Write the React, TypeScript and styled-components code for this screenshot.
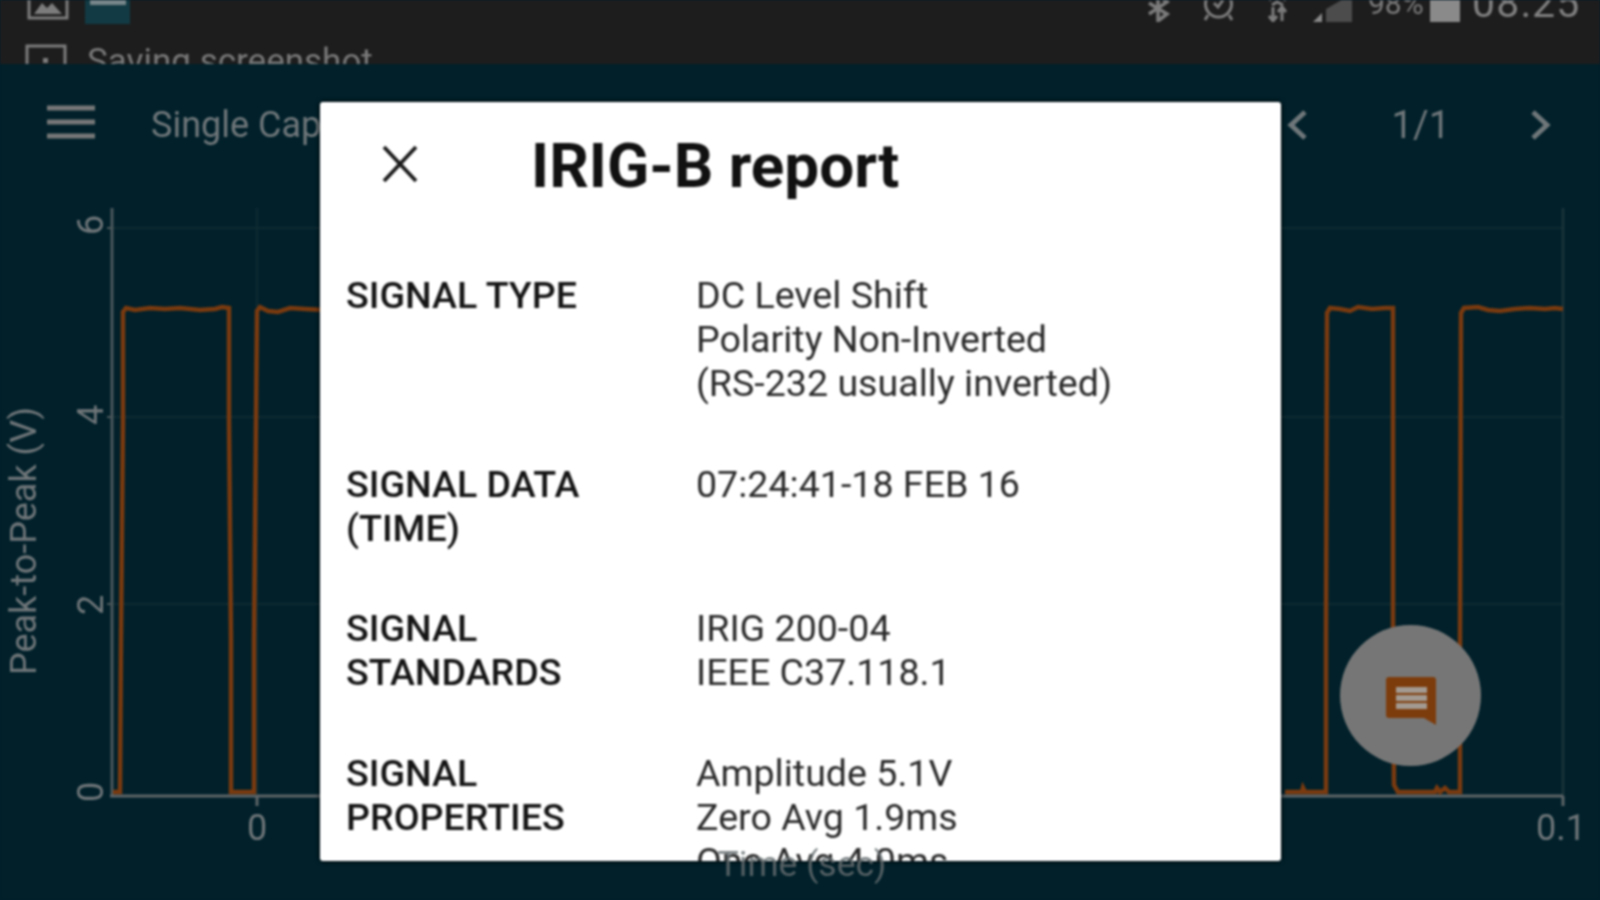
import React from "react";
import styled, { createGlobalStyle } from "styled-components";

const Global = createGlobalStyle`
  html, body { margin: 0; padding: 0; background: #01202a; }
  body { font-family: Roboto, "Liberation Sans", sans-serif; }
`;

const Screen = styled.div`
  position: relative;
  width: 1600px;
  height: 900px;
  overflow: hidden;
  background: #01202a;
  display: flex;
  flex-direction: column;
  filter: blur(0.9px);
`;

const StatusBar = styled.header`
  height: 64px;
  flex: none;
  overflow: hidden;
  background: #1d1d1d;
  color: #7c7c7c;
`;

const StatusRow = styled.div`
  height: 28px;
  margin-top: -6px;
  display: flex;
  align-items: flex-start;
  padding: 0 18px 0 27px;
`;

const Thumb = styled.div`
  width: 45px;
  height: 30px;
  margin-left: 16px;
  background: #123a44;
  display: flex;
  justify-content: center;
  align-items: flex-start;
  padding-top: 6px;
  box-sizing: border-box;
  &::before {
    content: "";
    width: 36px;
    height: 5px;
    background: #77868a;
  }
`;

const Tray = styled.div`
  margin-left: auto;
  display: flex;
  align-items: flex-end;
  height: 28px;
`;

const TrayIcon = styled.svg<{ $gap: number }>`
  display: block;
  flex: none;
  margin-left: ${(p) => p.$gap}px;
`;

const Percent = styled.span`
  font-size: 30px;
  line-height: 30px;
  width: 55px;
  margin-left: 16px;
  margin-bottom: 3px;
  white-space: nowrap;
`;

const Clock = styled.span`
  font-size: 41px;
  line-height: 41px;
  letter-spacing: 1.3px;
  margin-left: 12px;
  margin-bottom: -2px;
  width: 110px;
  white-space: nowrap;
  color: #808080;
`;

const NotifyRow = styled.div`
  display: flex;
  align-items: flex-start;
  gap: 20px;
  padding: 22px 0 0 25px;
  font-size: 35px;
  line-height: 40px;
  color: #787878;
`;

const NotifyText = styled.span`
  margin-top: -2px;
  white-space: nowrap;
`;

const Toolbar = styled.nav`
  height: 122px;
  flex: none;
  display: flex;
  align-items: center;
  padding: 0 48px 0 47px;
  box-sizing: border-box;
  color: #6f777a;
`;

const MenuIcon = styled.svg`
  margin-bottom: 7px;
`;

const ToolbarTitle = styled.span`
  font-size: 36px;
  margin-left: 56px;
  white-space: nowrap;
`;

const Pager = styled.div`
  margin-left: auto;
  display: flex;
  align-items: center;
  gap: 84px;
  font-size: 38px;
`;

const PageCount = styled.span`
  margin-right: -4px;
`;

const Plot = styled.svg`
  display: block;
  flex: 1;
  width: 1600px;
  text {
    font-family: Roboto, "Liberation Sans", sans-serif;
    fill: #6f7679;
  }
`;

const Dialog = styled.section`
  position: absolute;
  left: 320px;
  top: 102px;
  width: 961px;
  height: 759px;
  background: #fff;
  border-radius: 3px;
  overflow: hidden;
  display: flex;
  flex-direction: column;
  box-shadow: 0 0 5px #000;
  color: #222;
`;

const DialogHeader = styled.div`
  display: flex;
  align-items: center;
  height: 123px;
  flex: none;
  padding-left: 62px;
`;

const DialogTitle = styled.h1`
  margin: 3px 0 0 113px;
  font-size: 62px;
  font-weight: 700;
  color: #111;
  white-space: nowrap;
`;

const DialogBody = styled.div`
  display: flex;
  flex-direction: column;
  gap: 56.5px;
  padding: 48px 0 0 26px;
`;

const Row = styled.div`
  display: grid;
  grid-template-columns: 350px 1fr;
  font-size: 37.6px;
  line-height: 44px;
`;

const Label = styled.div`
  font-weight: 500;
  color: #151515;
  white-space: pre-line;
`;

const Value = styled.div`
  color: #2b2b2b;
  white-space: pre-line;
`;

const XAxisTitle = styled.div`
  position: absolute;
  left: 0;
  right: 0;
  top: 843px;
  padding-left: 4px;
  text-align: center;
  font-size: 35.5px;
  color: rgba(100, 108, 111, 0.85);
`;

const Fab = styled.button`
  position: absolute;
  left: 1340px;
  top: 625px;
  width: 141px;
  height: 141px;
  border: 0;
  border-radius: 50%;
  background: #767676;
  display: flex;
  align-items: center;
  justify-content: center;
  padding: 10px 0 0 0;
  box-sizing: border-box;
`;

const rows = [
  ["SIGNAL TYPE", "DC Level Shift\nPolarity Non-Inverted\n(RS-232 usually inverted)"],
  ["SIGNAL DATA\n(TIME)", "07:24:41-18 FEB 16"],
  ["SIGNAL\nSTANDARDS", "IRIG 200-04\nIEEE C37.118.1"],
  ["SIGNAL\nPROPERTIES", "Amplitude 5.1V\nZero Avg 1.9ms\nOne Avg 4.0ms"],
];

const TOP = 186;

const waveLeft =
  "M113 792 L120 792 L121 640 L123 420 L123 312 L126 308 L135 310 L150 308 L165 309 L180 308 L200 310 L215 309 L222 307 L229 308 L229 420 L231 640 L231 792 L254 792 L254 640 L256 420 L257 311 L260 307 L268 311 L278 312 L290 308 L305 309 L325 310";
const waveRight =
  "M1285 792 L1302 792 L1303 788 L1305 792 L1326 792 L1326 640 L1327 313 L1330 308 L1340 309 L1350 311 L1358 307 L1372 309 L1385 308 L1393 308 L1393 640 L1394 785 L1398 792 L1435 792 L1437 788 L1440 792 L1445 788 L1449 792 L1460 792 L1460 640 L1461 313 L1464 308 L1478 307 L1488 310 L1500 311 L1515 309 L1530 308 L1545 309 L1555 308 L1563 309";

export default function App() {
  return (
    <Screen>
      <Global />
      <StatusBar>
        <StatusRow>
          <svg width="42" height="30" viewBox="0 0 42 30">
            <rect x="2" y="2" width="38" height="22" fill="none" stroke="#7c7c7c" strokeWidth="3" />
            <path d="M7 20 L15 9 L20 14 L25 9 L35 20 Z" fill="#7c7c7c" />
          </svg>
          <Thumb />
          <Tray>
            <TrayIcon $gap={0} width="23" height="28" viewBox="0 0 23 28">
              <path d="M11 1 L11 27 L20 20 L2 9 M11 1 L20 8 L2 20" fill="none" stroke="#7c7c7c" strokeWidth="3.5" />
            </TrayIcon>
            <TrayIcon $gap={32} width="33" height="28" viewBox="0 0 33 28">
              <circle cx="16.5" cy="10" r="13" fill="none" stroke="#7c7c7c" strokeWidth="3" />
              <path d="M12 9 L16 13 L21 6" fill="none" stroke="#7c7c7c" strokeWidth="3" />
              <path d="M6 21 L3 26 M27 21 L30 26" stroke="#7c7c7c" strokeWidth="3" />
            </TrayIcon>
            <TrayIcon $gap={32} width="21" height="28" viewBox="0 0 21 28">
              <path d="M2 6 L10 2 L19 6 M5 11 L10 8 L16 11" fill="none" stroke="#7c7c7c" strokeWidth="3" />
              <path d="M6 13 L6 27 M2 22 L6 27 L10 22 M15 27 L15 14 M11 18 L15 13 L19 18" fill="none" stroke="#7c7c7c" strokeWidth="3" />
            </TrayIcon>
            <TrayIcon $gap={25} width="39" height="28" viewBox="0 0 39 28">
              <path d="M0 28 L9 19 L9 28 Z" fill="#8a8a8a" />
              <path d="M13 28 L13 15 L39 0 L39 28 Z" fill="#4c4c4c" />
            </TrayIcon>
            <Percent>98%</Percent>
            <TrayIcon $gap={7} width="30" height="28" viewBox="0 0 30 28">
              <rect x="0" y="0" width="30" height="28" fill="#8a8a8a" />
            </TrayIcon>
            <Clock>08:25</Clock>
          </Tray>
        </StatusRow>
        <NotifyRow>
          <svg width="42" height="34" viewBox="0 0 42 34">
            <rect x="2" y="2" width="38" height="30" fill="none" stroke="#7c7c7c" strokeWidth="3" />
            <rect x="18" y="14" width="5" height="5" fill="#7c7c7c" />
          </svg>
          <NotifyText>Saving screenshot</NotifyText>
        </NotifyRow>
      </StatusBar>

      <Toolbar>
        <MenuIcon width="48" height="36" viewBox="0 0 48 36">
          <path d="M0 4 H48 M0 18 H48 M0 32 H48" stroke="#777" strokeWidth="5" />
        </MenuIcon>
        <ToolbarTitle>Single Capture</ToolbarTitle>
        <Pager>
          <svg width="22" height="32" viewBox="0 0 22 32">
            <path d="M19 3 L5 16 L19 29" fill="none" stroke="#6f777a" strokeWidth="5" />
          </svg>
          <PageCount>1/1</PageCount>
          <svg width="22" height="32" viewBox="0 0 22 32">
            <path d="M3 3 L17 16 L3 29" fill="none" stroke="#6f777a" strokeWidth="5" />
          </svg>
        </Pager>
      </Toolbar>

      <Plot viewBox={`0 ${TOP} 1600 714`} width="1600" height="714">
        <path d="M113 228 H1563 M113 417 H1563 M113 604 H1563" stroke="#0f2b33" strokeWidth="2" />
        <path d="M257 208 V796" stroke="#0f2b33" strokeWidth="2" />
        <path d="M1563 208 V796" stroke="#1c343b" strokeWidth="2.5" />
        <path d="M112 208 V796" fill="none" stroke="#4a575b" strokeWidth="3" />
        <path d="M110 796 H1563" fill="none" stroke="#5d6568" strokeWidth="3" />
        <path d="M257 796 V806 M1563 796 V806" stroke="#5d6568" strokeWidth="3" />
        <path d="M107 228 H113 M107 417 H113 M107 604 H113" stroke="#4a575b" strokeWidth="2" />
        <path d={waveLeft} fill="none" stroke="#7a3a0f" strokeWidth="4.5" />
        <path d={waveRight} fill="none" stroke="#7a3a0f" strokeWidth="4.5" />
        <text x="257" y="840" fontSize="36" textAnchor="middle">0</text>
        <text x="1561" y="840" fontSize="36" textAnchor="middle">0.1</text>
        <text transform="translate(103 792) rotate(-90)" fontSize="36" textAnchor="middle">0</text>
        <text transform="translate(103 605) rotate(-90)" fontSize="36" textAnchor="middle">2</text>
        <text transform="translate(103 415) rotate(-90)" fontSize="36" textAnchor="middle">4</text>
        <text transform="translate(103 225) rotate(-90)" fontSize="36" textAnchor="middle">6</text>
        <text transform="translate(36 541) rotate(-90)" fontSize="36" textAnchor="middle">Peak-to-Peak (V)</text>
      </Plot>

      <Dialog>
        <DialogHeader>
          <svg width="36" height="40" viewBox="0 0 36 40">
            <path d="M2 3 L34 37 M34 3 L2 37" stroke="#1a1a1a" strokeWidth="3.8" />
          </svg>
          <DialogTitle>IRIG-B report</DialogTitle>
        </DialogHeader>
        <DialogBody>
          {rows.map(([l, v]) => (
            <Row key={l}>
              <Label>{l}</Label>
              <Value>{v}</Value>
            </Row>
          ))}
        </DialogBody>
      </Dialog>

      <XAxisTitle>Time (sec)</XAxisTitle>

      <Fab aria-label="Feedback">
        <svg width="50" height="48" viewBox="0 0 50 48">
          <path d="M3 0 H47 a3 3 0 0 1 3 3 V48 L38 41 H3 a3 3 0 0 1 -3 -3 V3 a3 3 0 0 1 3 -3 Z" fill="#7d3c0c" />
          <path d="M10 10 H41 V16 H10 Z M10 18 H41 V24 H10 Z M10 26 H41 V32 H10 Z" fill="#a39a92" />
        </svg>
      </Fab>
    </Screen>
  );
}
